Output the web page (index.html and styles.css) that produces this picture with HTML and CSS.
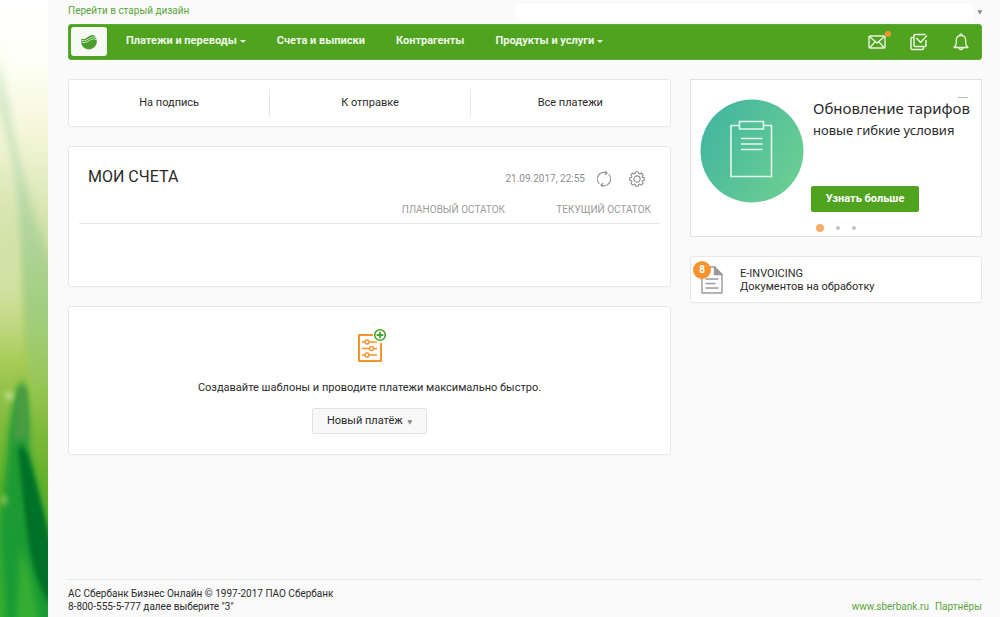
FILE: index.html
```html
<!DOCTYPE html>
<html lang="ru">
<head>
<meta charset="utf-8">
<meta name="viewport" content="width=device-width, initial-scale=1">
<title>Сбербанк Бизнес Онлайн</title>
<link rel="stylesheet" href="styles.css">
</head>
<body class="page">
<div class="scenery" aria-hidden="true">
  <svg class="scenery-art" viewBox="0 0 48 617" preserveAspectRatio="none">
    <defs>
      <linearGradient id="sky" x1="0" y1="0" x2="0" y2="1">
        <stop offset="0" stop-color="#ffffff"/>
        <stop offset=".1" stop-color="#fefff6"/>
        <stop offset=".2" stop-color="#f6f8dc"/>
        <stop offset=".31" stop-color="#e0eabc"/>
        <stop offset=".45" stop-color="#c3d98b"/>
        <stop offset=".58" stop-color="#a6cb55"/>
        <stop offset=".68" stop-color="#83bc3e"/>
        <stop offset=".78" stop-color="#62b129"/>
        <stop offset="1" stop-color="#38a830"/>
      </linearGradient>
      <linearGradient id="blade" x1="0" y1="0" x2="0" y2="1">
        <stop offset="0" stop-color="#e2efd6"/>
        <stop offset=".4" stop-color="#b5d7a4"/>
        <stop offset=".7" stop-color="#a0cc7b"/>
        <stop offset="1" stop-color="#8cc450" stop-opacity="0"/>
      </linearGradient>
      <linearGradient id="glow" x1="0" y1="0" x2="0" y2="1">
        <stop offset="0" stop-color="#dbe8b8" stop-opacity="0"/>
        <stop offset=".6" stop-color="#d3e2a8"/>
        <stop offset="1" stop-color="#c3da7c" stop-opacity="0"/>
      </linearGradient>
      <filter id="soft" filterUnits="userSpaceOnUse" x="-30" y="-50" width="110" height="730"><feGaussianBlur stdDeviation="3 12"/></filter>
      <filter id="near" filterUnits="userSpaceOnUse" x="-30" y="-50" width="110" height="730"><feGaussianBlur stdDeviation="3 7"/></filter>
      <filter id="tip" filterUnits="userSpaceOnUse" x="-30" y="-50" width="110" height="730"><feGaussianBlur stdDeviation="2 3"/></filter>
    </defs>
    <rect width="48" height="617" fill="url(#sky)"/>
    <path d="M-10 150 L16 170 Q24 280 24 370 L-10 370Z" fill="url(#glow)" filter="url(#soft)"/>
    <path d="M-4 65 Q7 75 16 150 Q34 220 56 275 L56 430 L30 400 Q24 290 18 200 Q10 130 -4 110Z" fill="url(#blade)" filter="url(#soft)"/>
    <path d="M8 440 Q14 390 22 386 Q28 392 29 450 L52 555 L56 660 L-16 660 L-16 560 Q2 540 8 440Z" fill="#169934" opacity=".9" filter="url(#near)"/>
    <path d="M-12 480 Q2 500 8 660 L-12 660ZM20 550 Q34 570 44 660 L14 660Z" fill="#35ad32" filter="url(#near)"/>
    <path d="M18 450 Q23 440 29 458 Q38 490 54 555 L54 608 Q34 590 26 525Z" fill="#007126" filter="url(#tip)"/>
    <path d="M17 390 Q22 380 27 388 L29 440 Q20 435 13 445Z" fill="#489c42" filter="url(#tip)"/>
    <ellipse cx="9" cy="396" rx="5" ry="3" fill="#dcebb0" opacity=".8" filter="url(#tip)"/>
    <ellipse cx="4" cy="500" rx="4" ry="4" fill="#9acb5c" opacity=".8" filter="url(#tip)"/>
  </svg>
</div>

<div class="shell">
  <div class="topline">
    <a class="link" href="#">Перейти в старый дизайн</a>
    <button class="company" type="button" aria-label="Выбор организации"><span class="company-name"></span><span class="tri" aria-hidden="true">▼</span></button>
  </div>

  <header class="navbar">
    <a class="logo" href="#" aria-label="Сбербанк">
      <svg width="16" height="16" viewBox="0 0 16 16">
        <path d="M.3 4.500C2 5.500 4 5.200 6.500 3.200S11.500.3 13.500 1.500Q16.300 4.500 15.800 8.500A7.900 7.900 0 0 1 .2 9Q-.2 6.500.3 4.500Z" fill="#4a9f2c"/>
        <path d="M.2 6.200C3 7.400 4.800 6.800 7.300 5S12 2.200 15 3.800M.2 8C3 9.200 5.300 8.600 7.800 6.900S12.500 4.200 15.700 5.700" fill="none" stroke="#f8fbf5" stroke-width=".7"/>
      </svg>
    </a>
    <nav class="menu">
      <button class="menu-item" type="button">Платежи и переводы<span class="caret"></span></button>
      <a class="menu-item" href="#">Счета и выписки</a>
      <a class="menu-item" href="#">Контрагенты</a>
      <button class="menu-item" type="button">Продукты и услуги<span class="caret"></span></button>
    </nav>
    <div class="tools">
      <button class="tool" type="button" aria-label="Письма">
        <svg width="18" height="18" viewBox="0 0 18 18" fill="none" stroke="#e9f5e0" stroke-width="1.400" stroke-linejoin="round"><rect x="1" y="3" width="16" height="12" rx="1"/><path d="M2 4l7 6 7-6M2 14.500l5-5.500M16 14.500l-5-5.500"/></svg>
        <span class="dot"></span>
      </button>
      <button class="tool" type="button" aria-label="Задачи">
        <svg width="18" height="18" viewBox="0 0 18 18" fill="none" stroke="#e9f5e0" stroke-width="1.500" stroke-linejoin="round"><path d="M16 7v5.500a1 1 0 0 1-1 1H5a1 1 0 0 1-1-1V2.500a1 1 0 0 1 1-1h10.500"/><path d="M4 4.500H2a1 1 0 0 0-1 1V15.500a1 1 0 0 0 1 1h10.500a1 1 0 0 0 1-1v-2M6.500 5l4 4.500L17 2.500"/></svg>
      </button>
      <button class="tool" type="button" aria-label="Уведомления">
        <svg width="18" height="18" viewBox="0 0 18 18" fill="none" stroke="#e9f5e0" stroke-width="1.300" stroke-linejoin="round"><path d="M2 14.500h14c-1.500-1.300-2.300-2.500-2.300-4.500V7.500c0-3-1.800-4.800-4.700-4.800S4.300 4.500 4.300 7.500V10c0 2-.8 3.200-2.300 4.500ZM7.800 2.700V2a1.200 1.200 0 0 1 2.400 0v.7M7 14.500a2 2 0 0 0 4 0"/></svg>
      </button>
    </div>
  </header>

  <div class="columns">
    <main class="main">
      <nav class="card tabs">
        <a class="tab" href="#">На подпись</a>
        <a class="tab" href="#">К отправке</a>
        <a class="tab" href="#">Все платежи</a>
      </nav>

      <section class="card accounts">
        <div class="accounts-head">
          <h1 class="title">МОИ СЧЕТА</h1>
          <time class="stamp" datetime="2017-09-21T22:55">21.09.2017, 22:55</time>
          <button class="icon-button" type="button" aria-label="Обновить">
            <svg width="16" height="16" viewBox="0 0 16 16" fill="none" stroke="#8c8c8c" stroke-width="1.100"><path d="M3.400 12.600A6.500 6.500 0 0 1 10.800 2.100M12.600 3.400A6.500 6.500 0 0 1 5.200 13.900"/><path d="M9.300.2l1.700 2-2.300 1.600M6.700 15.800l-1.700-2 2.300-1.600"/></svg>
          </button>
          <button class="icon-button" type="button" aria-label="Настройки">
            <svg width="16" height="16" viewBox="0 0 16 16" fill="none" stroke="#8c8c8c" stroke-width="1.100" stroke-linejoin="round"><path d="M6.700.8h2.600l.4 1.800 1 .4 1.600-1 1.800 1.800-1 1.600.4 1 1.800.4v2.500l-1.800.4-.4 1 1 1.600-1.800 1.800-1.600-1-1 .4-.4 1.800H6.700l-.4-1.800-1-.4-1.600 1-1.800-1.800 1-1.600-.4-1-1.800-.4V6.800l1.800-.4.4-1-1-1.600L3.700 2l1.600 1 1-.4Z"/><circle cx="8" cy="8" r="3.100"/></svg>
          </button>
        </div>
        <table class="balances">
          <thead>
            <tr><td></td><th scope="col">ПЛАНОВЫЙ ОСТАТОК</th><th scope="col">ТЕКУЩИЙ ОСТАТОК</th></tr>
          </thead>
        </table>
      </section>

      <section class="card templates">
        <svg class="templates-icon" width="34" height="36" viewBox="-4 0 34 36" fill="none" stroke="#f7932c" stroke-width="2">
          <path d="M16 7H2v26h22V15"/>
          <path d="M5 14h2.500M12.500 14H20M5 20.500h7M17 20.500h3M5 27h2.500M12.500 27H20" stroke-width="1.500"/>
          <g stroke-width="1.500"><circle cx="10" cy="14" r="2"/><circle cx="14.500" cy="20.500" r="2"/><circle cx="10" cy="27" r="2"/></g>
          <g stroke="#43a22c"><circle cx="23" cy="7" r="5.300" stroke-width="1.600" fill="#fff"/><path d="M19.700 7h6.600M23 3.700v6.600" stroke-width="1.800"/></g>
        </svg>
        <p class="templates-text">Создавайте шаблоны и проводите платежи максимально быстро.</p>
        <button class="new-payment" type="button">Новый платёж <span class="tri" aria-hidden="true">▼</span></button>
      </section>
    </main>

    <aside class="side">
      <section class="banner">
        <button class="collapse" type="button" aria-label="Свернуть"></button>
        <svg class="banner-art" width="104" height="104" viewBox="0 0 104 104">
          <defs><linearGradient id="disc" x1="0" y1=".2" x2="1" y2=".8"><stop offset="0" stop-color="#42b5a0"/><stop offset="1" stop-color="#6dd092"/></linearGradient></defs>
          <circle cx="52" cy="52" r="51.500" fill="url(#disc)"/>
          <path d="M39.500 26.500h-8.500v51h40.500v-51H63.500M39.500 22.500h24v7.500h-24zM41 39.500h21.500M41 45h21.500M41 50.500h21.500" fill="none" stroke="#e3f7ec" stroke-width="1.600"/>
        </svg>
        <div class="banner-copy">
          <h2 class="banner-title">Обновление тарифов</h2>
          <p class="banner-text">новые гибкие условия</p>
          <button class="more" type="button">Узнать больше</button>
          <div class="pager">
            <button class="pager-dot pager-dot-on" type="button" aria-label="Слайд 1"></button>
            <button class="pager-dot" type="button" aria-label="Слайд 2"></button>
            <button class="pager-dot" type="button" aria-label="Слайд 3"></button>
          </div>
        </div>
      </section>

      <a class="card invoicing" href="#">
        <span class="invoice-icon">
          <svg width="22" height="28" viewBox="0 0 22 28" fill="none" stroke="#9b9b9b" stroke-width="1.400"><path d="M1 1h12.500L21 8.500V27H1Z"/><path d="M13.500 1v7.500H21Z" fill="#9b9b9b"/><path d="M4.500 13h13M4.500 17.500h10M4.500 22h13" stroke-width="1.500"/></svg>
          <span class="count">8</span>
        </span>
        <span class="invoice-copy">E-INVOICING<br>Документов на обработку</span>
      </a>
    </aside>
  </div>

  <footer class="footer">
    <div>АС Сбербанк Бизнес Онлайн © 1997-2017 ПАО Сбербанк<br>8-800-555-5-777 далее выберите "3"</div>
    <div class="footer-links"><a class="link" href="#">www.sberbank.ru</a><a class="link" href="#">Партнёры</a></div>
  </footer>
</div>
</body>
</html>
```
FILE: styles.css
```css
* { box-sizing: border-box; }

.page {
  margin: 0;
  min-height: 100vh;
  display: flex;
  background: #fafafa;
  color: #2b2b2b;
  font: 12px/14px Roboto, "Liberation Sans", sans-serif;
}

h1, h2, p { margin: 0; }
button { font: inherit; color: inherit; padding: 0; border: 0; background: none; cursor: pointer; }
a { color: inherit; text-decoration: none; }
svg { display: block; }

.scenery { flex: 0 0 48px; display: grid; overflow: hidden; }
.scenery-art { width: 100%; height: 100%; }

.shell { flex: 1; min-width: 0; padding: 0 18px 0 20px; display: flex; flex-direction: column; }

.link { color: #5aa53a; }

.topline { height: 24px; display: flex; justify-content: space-between; align-items: center; font-size: 10px; }
.topline .link { padding-bottom: 2px; }
.company { width: 51%; display: flex; align-items: center; gap: 4px; }
.company-name { flex: 1; height: 17px; background: #fff; }
.tri { color: #858585; font: 6px/8px "DejaVu Sans", sans-serif; }

.navbar { height: 36px; padding: 2px 11px 3px 2px; display: flex; align-items: center; border: 1px solid #5bab37; border-radius: 3px; background: #4fa31f; }
.logo { width: 36px; height: 29px; display: grid; place-items: center; background: #f8fbf5; border-radius: 3px; }
.menu { flex: 1; display: flex; gap: 31px; padding: 0 0 1px 19px; }
.menu-item { display: flex; align-items: center; gap: 3px; color: #eef7e8; font-size: 11px; font-weight: 700; white-space: nowrap; }
.caret { border: 3px solid transparent; border-top-color: #eef7e8; border-bottom: 0; }
.tools { display: flex; gap: 24px; }
.tool { position: relative; }
.dot { position: absolute; top: -2px; right: -5px; width: 6px; height: 6px; border-radius: 50%; background: #f7932c; }

.columns { flex: 1; display: grid; grid-template-columns: minmax(0, 603fr) minmax(0, 292fr); gap: 19px; align-items: start; padding: 19px 0; }
.main, .side { display: grid; grid-template-columns: minmax(0, 1fr); gap: 19px; }
.card { background: #fff; border: 1px solid #e7e7e7; border-radius: 3px; }

.tabs { display: grid; grid-template-columns: repeat(3, 1fr); padding: 9px 0; }
.tab { padding: 7px 0; text-align: center; font-size: 11px; }
.tab + .tab { border-left: 1px solid #e7e7e7; }

.accounts { min-height: 141px; padding: 19px 10px; }
.accounts-head { display: flex; align-items: center; padding: 0 15px 0 9px; }
.title { flex: 1; font-size: 16px; line-height: 22px; font-weight: 400; }
.stamp { color: #8f8f8f; font-size: 10px; padding-top: 4px; }
.icon-button { padding-top: 4px; margin-left: 11px; }
.icon-button + .icon-button { margin-left: 17px; }
.balances { width: 100%; margin-top: 11px; border-collapse: collapse; border-bottom: 1px solid #e7e7e7; }
.balances th { width: 146px; padding: 4px 9px 6px 0; text-align: right; color: #9a9a9a; font-size: 10px; font-weight: 400; white-space: nowrap; }

.templates { display: flex; flex-direction: column; align-items: center; padding: 21px 0 20px; }
.templates-text { font-size: 11px; margin: 17px 0 13px; }
.new-payment { padding: 5px 14px; border: 1px solid #e2e2e2; border-radius: 2px; background: #f8f8f8; font-size: 11px; }
.new-payment .tri { margin-left: 2px; }

.banner { position: relative; display: flex; gap: 7px; padding: 19px 9px 3px 9px; background: #fff; border: 1px solid #e2e2e2; }
.collapse { position: absolute; top: 17px; right: 13px; width: 10px; height: 1px; background: #b8b8b8; }
.banner-art { flex: none; }
.banner-copy { min-width: 0; font-family: "Noto Sans", "Open Sans", sans-serif; white-space: nowrap; }
.banner-title { padding-left: 2px; font-size: 15px; line-height: 18px; font-weight: 400; }
.banner-text { padding-left: 2px; font-size: 13px; line-height: 18px; margin-top: 4px; }
.more { display: block; width: 108px; height: 26px; margin-top: 47px; border-radius: 2px; background: #4fa31f; color: #fff; font: 700 11px/14px Roboto, sans-serif; }
.pager { display: flex; align-items: center; gap: 12px; height: 10px; margin: 11px 0 0 5px; }
.pager-dot { width: 4px; height: 4px; border-radius: 50%; background: #c4c4c4; }
.pager-dot-on { width: 8px; height: 8px; background: #f8ae62; }

.invoicing { display: flex; align-items: center; gap: 17px; min-height: 47px; padding: 0 10px; }
.invoice-icon { position: relative; }
.count { position: absolute; top: -5px; left: -8px; width: 18px; height: 18px; border-radius: 50%; background: #f7932c; color: #fff; font-size: 10px; font-weight: 700; line-height: 18px; text-align: center; }
.invoice-copy { font-size: 11px; line-height: 13px; }

.footer { display: flex; justify-content: space-between; align-items: flex-end; padding: 7px 0 4px; border-top: 1px solid #e7e7e7; font-size: 10px; line-height: 13px; }
.footer-links { display: flex; gap: 6px; }
```
